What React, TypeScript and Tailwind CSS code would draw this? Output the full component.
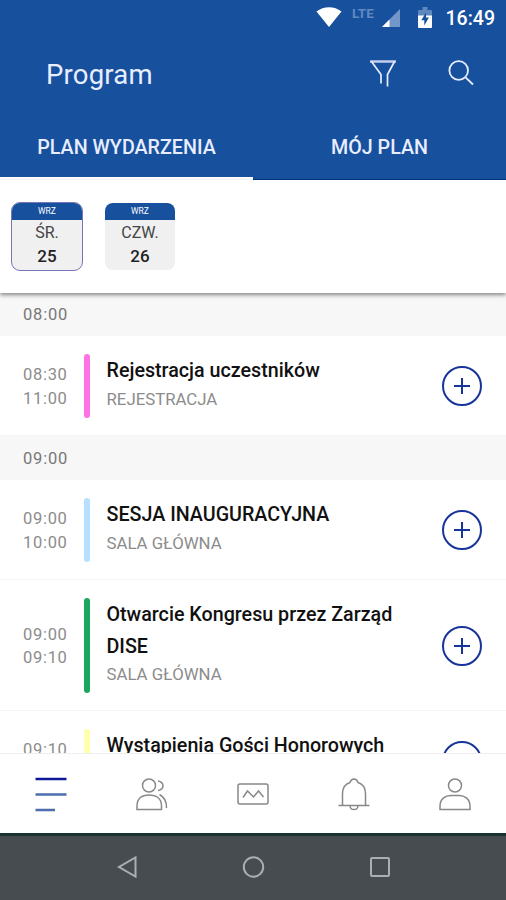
import clsx from 'clsx';

type Session = {
  start: string;
  end: string;
  title: string;
  place: string;
  bar: string;
};

const morning: Session[] = [
  { start: '08:30', end: '11:00', title: 'Rejestracja uczestników', place: 'REJESTRACJA', bar: 'bg-[#ff72e4]' },
];

const opening: Session[] = [
  { start: '09:00', end: '10:00', title: 'SESJA INAUGURACYJNA', place: 'SALA GŁÓWNA', bar: 'bg-[#b5e0ff]' },
  { start: '09:00', end: '09:10', title: 'Otwarcie Kongresu przez Zarząd DISE', place: 'SALA GŁÓWNA', bar: 'bg-[#1ba55f]' },
  { start: '09:10', end: '', title: 'Wystąpienia Gości Honorowych', place: '', bar: 'bg-[#ffffb0]' },
];

function StatusBar() {
  return (
    <div className="flex h-9 items-start text-white">
      <svg className="mt-[7px] ml-[316px] h-5 w-[26px]" viewBox="0 0 26 20" fill="currentColor">
        <path d="M.5 4.5Q6 .2 13 .2t12.500 4.300L13 20Z" />
      </svg>
      <span className="mt-[5px] ml-[10px] w-[25px] text-[13.500px]/[17px] font-bold text-[#6189c0]">LTE</span>
      <svg className="mt-[9px] ml-[4px] h-[18px] w-[19px]" viewBox="0 0 19 18">
        <path d="M19 0v18H1Z" fill="#7397c8" />
        <path d="M8.500 10.500V18H1Z" fill="#fff" />
      </svg>
      <svg className="mt-[7px] ml-[18px] h-[21px] w-[14px]" viewBox="0 0 14 21">
        <path d="M4.500 0h5v3H13a1 1 0 0 1 1 1v6H0V4a1 1 0 0 1 1-1h3.500Z" fill="#5f88bf" />
        <path d="M0 8.500h14v11.500a1 1 0 0 1-1 1H1a1 1 0 0 1-1-1Z" fill="#fff" />
        <path d="M8 5.500 3.300 13.300h3V18.500l4.600-8H8Z" fill="#17509d" />
      </svg>
      <span className="mt-[7px] ml-[13.500px] text-[19.500px]/[24px] font-medium">16:49</span>
    </div>
  );
}

function Header() {
  return (
    <header className="h-[180px] bg-[#17509d] text-[#e8edff]">
      <StatusBar />
      <div className="flex h-[78px] items-center pl-[46px]">
        <h1 className="w-[324px] text-[27.500px]/[32px] tracking-[0.2px]">Program</h1>
        <svg className="-mt-1 h-7 w-[26px]" viewBox="0 0 26 28" fill="none" stroke="currentColor" strokeWidth="1.700">
          <path d="M0 2.500H26" strokeWidth="2.500" stroke="#c3cfec" />
          <path d="M1.500 2.500 11 15.500V24.500M24.500 2.500 17.500 15.500V27.500" />
        </svg>
        <svg className="-mt-1 ml-[52px] h-[26px] w-[26px]" viewBox="0 0 26 26" fill="none" stroke="currentColor" strokeWidth="1.800">
          <circle cx="10.700" cy="10.500" r="9.300" />
          <path d="m17.500 17.300 7.500 7.200" />
        </svg>
      </div>
      <div className="grid h-[66px] grid-cols-2 text-center text-[19.700px] font-medium">
        <div className="border-b-[3px] border-white pt-[20px] leading-[28px]">PLAN WYDARZENIA</div>
        <div className="border-b border-[#003582] pt-[20px] leading-[28px]">MÓJ PLAN</div>
      </div>
    </header>
  );
}

function DayTile({ day, date, active }: { day: string; date: string; active?: boolean }) {
  return (
    <div
      className={clsx(
        'h-[69px] w-[72px] overflow-hidden rounded-[9px] border bg-[#f0f0f0] text-center text-[#222]',
        active ? 'border-[#7774b7]' : 'border-white',
      )}
    >
      <div className="h-[17px] bg-[#17509d] text-[8.500px]/[17px] text-white">WRZ</div>
      <div className="mt-px text-[16px]/[23px] text-[#444]">{day}</div>
      <div className="text-[17px]/[25px] font-medium">{date}</div>
    </div>
  );
}

function GroupHeader({ time, className }: { time: string; className?: string }) {
  return (
    <div className={clsx('flex items-center bg-[#f7f7f7] pt-[2px] pl-[23px] text-[16.500px] tracking-[0.8px] text-[#777]', className)}>
      {time}
    </div>
  );
}

function SessionRow({ start, end, title, place, bar }: Session) {
  return (
    <div className="flex border-b border-[#f5f5f5] pt-[18px] pb-[17px]">
      <div className="mt-px w-[84px] shrink-0 self-center pl-[23px] text-[16.500px]/[23.500px] tracking-[0.7px] text-[#8c8c8c]">
        <div>{start}</div>
        <div className="min-h-[23.5px]">{end}</div>
      </div>
      <div className={clsx('w-[6px] shrink-0 rounded-full', bar)} />
      <div className="ml-[16.5px] min-h-[64px] w-[309.5px] pt-px pb-[7px]">
        <h2 className="text-[19.700px]/[31.500px] font-medium text-[#111]">{title}</h2>
        <p className="min-h-[24px] text-[16.800px]/[24px] text-[#8c8c8c]">{place}</p>
      </div>
      <svg className="ml-[25px] h-[42px] w-[42px] self-center" viewBox="0 0 42 42" fill="none" stroke="#17349a" strokeWidth="2">
        <circle cx="21" cy="21" r="19" />
        <path d="M13 21h16M21 13v16" />
      </svg>
    </div>
  );
}

function TabBar() {
  return (
    <nav className="grid h-[80px] shrink-0 grid-cols-5 items-center justify-items-center border-t border-[#eee] bg-white text-[#888]">
      <svg className="h-9 w-8" viewBox="0 0 32 36" fill="none" strokeWidth="2.500">
        <path d="M.5 3H31.500" stroke="#0c1898" />
        <path d="M.5 18.500H31.500M.5 34H20" stroke="#4d6eac" />
      </svg>
      <svg className="h-[34px] w-8" viewBox="0 0 32 34" fill="none" stroke="currentColor" strokeWidth="1.500">
        <circle cx="13" cy="8.500" r="6.500" />
        <path d="M1 32.500V29C1 21.500 6 18 13 18s12.500 3.500 12.500 11v3.500ZM22 4q5 1 5 4.800t-5 4.700M23.500 17.500q7.500 4 7 13.500" />
      </svg>
      <svg className="h-6 w-8" viewBox="0 0 32 24" fill="none" stroke="currentColor" strokeWidth="1.500">
        <rect x="1" y="2" width="30" height="20" rx="2" />
        <path d="M6 15.500 10.500 9l6 6 5-6 5 6" />
      </svg>
      <svg className="h-[34px] w-8" viewBox="0 0 32 34" fill="none" stroke="currentColor" strokeWidth="1.500">
        <path d="M.5 28.500H31.500M4.500 28.500V16.500C4.500 10.500 7.500 7 12 5.500 13.500 .8 18.500 .8 20 5.500c4.500 1.500 7.500 5 7.500 11V28.500M12 29c.5 4.800 7.500 4.800 8 0" />
      </svg>
      <svg className="h-[34px] w-8" viewBox="0 0 32 34" fill="none" stroke="currentColor" strokeWidth="1.500">
        <circle cx="16" cy="8.500" r="6.500" />
        <path d="M1 32.500V29C1 22 6 18.500 12 18.500h8c6 0 11 3.500 11 10.500v3.500Z" />
      </svg>
    </nav>
  );
}

function SystemNav() {
  return (
    <div className="flex h-[67px] shrink-0 items-center border-t-3 border-[#193330] bg-[#464c50] pb-[2px] pl-[116px] text-[#a9b0b2]">
      <svg className="h-6 w-[22px]" viewBox="0 0 22 24" fill="none" stroke="currentColor" strokeWidth="2">
        <path d="M19.500 2.500v19L3 12Z" />
      </svg>
      <svg className="ml-[103px] h-6 w-6" viewBox="0 0 24 24" fill="none" stroke="currentColor" strokeWidth="2">
        <circle cx="12.500" cy="12" r="9.700" />
      </svg>
      <svg className="ml-[103px] h-6 w-6" viewBox="0 0 24 24" fill="none" stroke="currentColor" strokeWidth="2">
        <rect x="3" y="3" width="18" height="18" rx="1" />
      </svg>
    </div>
  );
}

export default function App() {
  return (
    <div className="flex h-[900px] w-[506px] flex-col overflow-hidden bg-white font-['Roboto',sans-serif]">
      <Header />
      <div className="relative flex h-[113px] shrink-0 gap-[21px] bg-white pt-[22px] pl-[11px] shadow-[0_2px_4px_rgba(0,0,0,0.45)]">
        <DayTile day="ŚR." date="25" active />
        <DayTile day="CZW." date="26" />
      </div>
      <main className="h-[460px] shrink-0 overflow-hidden">
        <GroupHeader time="08:00" className="h-[43px]" />
        {morning.map((s) => (
          <SessionRow key={s.title} {...s} />
        ))}
        <GroupHeader time="09:00" className="h-[44px]" />
        {opening.map((s) => (
          <SessionRow key={s.title} {...s} />
        ))}
      </main>
      <TabBar />
      <SystemNav />
    </div>
  );
}
